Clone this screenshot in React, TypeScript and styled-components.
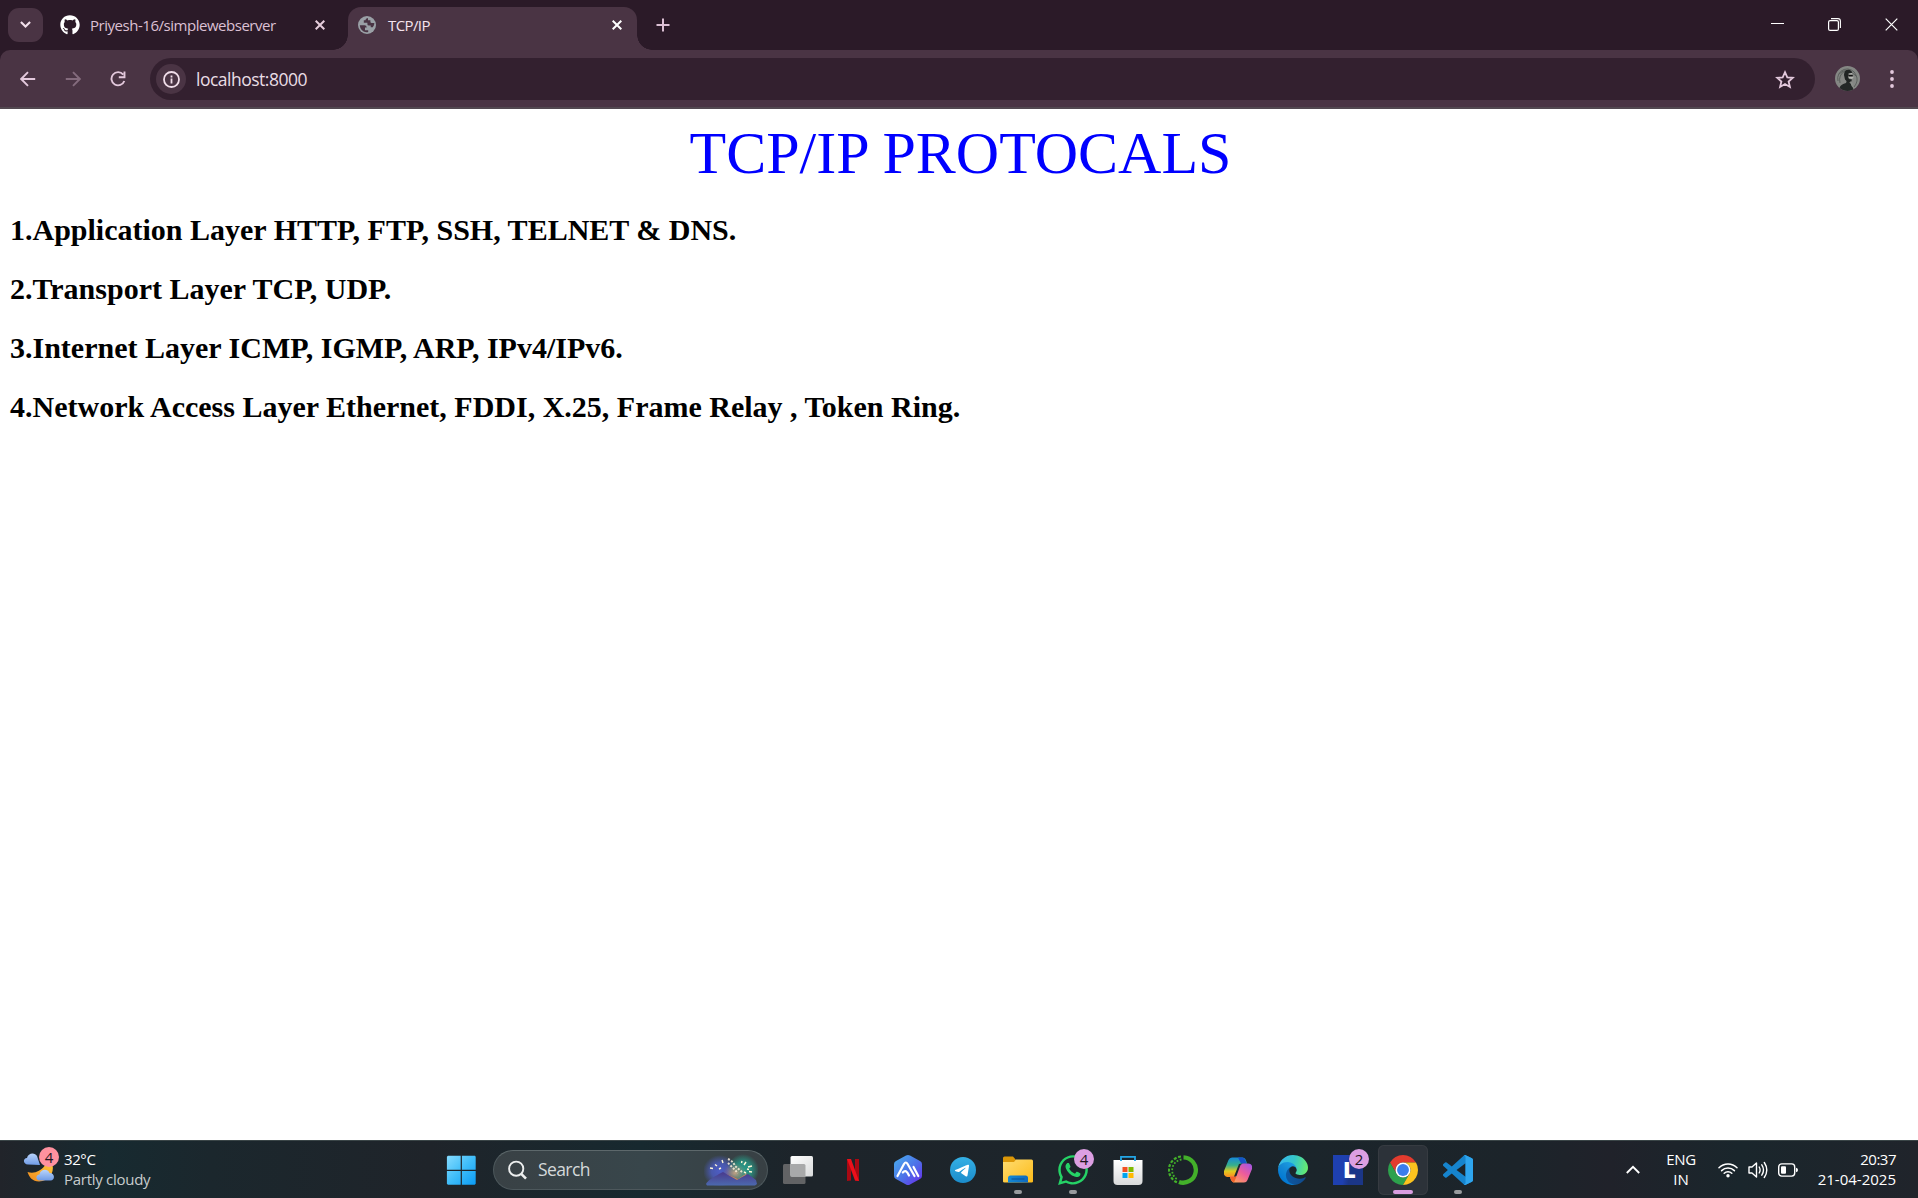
import React from "react";
import styled, { createGlobalStyle } from "styled-components";
import { FaGithub, FaWhatsapp } from "react-icons/fa";

const UI_FONT = '"Open Sans", "Noto Sans", sans-serif';

const GlobalStyle = createGlobalStyle`
  html, body { margin: 0; padding: 0; background: #fff; overflow: hidden; }
  *, *::before, *::after { box-sizing: border-box; }
  svg { display: block; flex: none; }
`;

const Screen = styled.div`
  width: 1918px;
  height: 1198px;
  display: flex;
  flex-direction: column;
  font-family: ${UI_FONT};
  background: #fff;
`;

const Label = styled.span<{ $size?: number; $track?: number; $color?: string }>`
  font-size: ${(p) => p.$size ?? 15}px;
  letter-spacing: ${(p) => p.$track ?? 0}px;
  color: ${(p) => p.$color ?? "#fff"};
  line-height: 20px;
  white-space: nowrap;
`;

/* Browser chrome */
const TabStrip = styled.div`
  height: 50px;
  flex: none;
  display: flex;
  align-items: flex-start;
  background: #2b1a28;
  padding-left: 8px;
`;

const TabSearch = styled.div`
  width: 35px;
  height: 34px;
  margin-top: 8px;
  border-radius: 11px;
  background: #4a3444;
  display: flex;
  align-items: center;
  justify-content: center;
`;

const Tab = styled.div<{ $active?: boolean; $width: number }>`
  position: relative;
  width: ${(p) => p.$width}px;
  height: ${(p) => (p.$active ? 43 : 50)}px;
  margin-top: ${(p) => (p.$active ? 7 : 0)}px;
  padding: ${(p) => (p.$active ? "0 15px 7px 10px" : "0 23px 0 17px")};
  display: flex;
  align-items: center;
  gap: ${(p) => (p.$active ? 12 : 10)}px;
  border-radius: 13px 13px 0 0;
  background: ${(p) => (p.$active ? "#4a3444" : "transparent")};
`;

const TabFoot = styled.span<{ $side: "left" | "right" }>`
  position: absolute;
  bottom: 0;
  ${(p) => p.$side}: -15px;
  width: 15px;
  height: 15px;
  background: radial-gradient(
    circle at ${(p) => (p.$side === "left" ? "0 0" : "100% 0")},
    transparent 14.5px,
    #4a3444 15px
  );
`;

const Spacer = styled.div`
  flex: 1;
`;

const NewTab = styled.div`
  padding: 18px 0 0 19px;
`;

const WindowControls = styled.div`
  display: flex;
  align-items: center;
  gap: 44px;
  height: 48px;
  padding-right: 20px;
`;

const ToolbarBack = styled.div`
  flex: none;
  height: 59px;
  background: #2b1a28;
`;

const Toolbar = styled.div`
  height: 59px;
  background: #4a3444;
  border-radius: 10px 10px 0 0;
  border-bottom: 2px solid #524850;
  display: flex;
  align-items: center;
  padding: 1px 24px 0 20px;
`;

const NavButtons = styled.div`
  display: flex;
  align-items: center;
  width: 130px;
  height: 40px;
  padding-bottom: 1px;
  gap: 29px;
`;

const AddressBar = styled.div`
  width: 1665px;
  height: 42px;
  border-radius: 21px;
  background: #33202f;
  display: flex;
  align-items: center;
  padding: 0 20px 0 6px;
`;

const SiteInfo = styled.div`
  width: 30px;
  height: 30px;
  border-radius: 50%;
  background: #4a3444;
  margin-right: 10px;
  display: flex;
  align-items: center;
  justify-content: center;
`;

const Avatar = styled.div`
  width: 25px;
  height: 25px;
  margin-left: 20px;
  margin-bottom: 1px;
  border-radius: 50%;
  overflow: hidden;
`;

/* Web page */
const Page = styled.main`
  flex: 1;
  padding: 10px;
  font-family: "Liberation Serif", "Times New Roman", serif;
  color: #000;
`;

const Title = styled.div`
  padding-left: 3px;
  color: #00f;
  font-size: 60px;
  line-height: 69px;
  text-align: center;
`;

const LayerLine = styled.h2`
  margin: 25px 0 0;
  font-size: 30px;
  line-height: 34px;
  font-weight: 700;
`;

/* Taskbar */
const Taskbar = styled.footer`
  height: 58px;
  flex: none;
  border-top: 1px solid #3a4547;
  display: flex;
  align-items: center;
  background: linear-gradient(90deg, #21242a 0, #172a30 110px, #1b272d 210px, #1f242a 430px, #17292f 640px, #1d242a 800px, #1d252b 1080px, #1b2229 1180px, #1b252b 1300px, #1c242a 1520px, #20222a 1610px, #1a262c 1740px, #20242b 1918px);
`;

const Weather = styled.div`
  width: 436px;
  display: flex;
  align-items: center;
  padding-left: 23px;
  gap: 9px;
`;

const WeatherIcon = styled.div`
  position: relative;
  width: 32px;
  height: 40px;
`;

const Stack = styled.div<{ $align?: string; $width?: number }>`
  display: flex;
  flex-direction: column;
  width: ${(p) => (p.$width ? `${p.$width}px` : "auto")};
  padding-bottom: 2px;
  align-items: ${(p) => p.$align ?? "flex-start"};
`;

const Badge = styled.span<{ $color: string; $top: number; $left: number }>`
  position: absolute;
  top: ${(p) => p.$top}px;
  left: ${(p) => p.$left}px;
  width: 20px;
  height: 20px;
  border-radius: 50%;
  background: ${(p) => p.$color};
  color: #1e1420;
  font-size: 15px;
  line-height: 20px;
  text-align: center;
`;

const SearchBox = styled.div`
  width: 275px;
  height: 40px;
  margin: 0 5px 0 7px;
  border-radius: 20px;
  border: 1px solid #4d585c;
  border-top-color: #5d686b;
  background: linear-gradient(90deg, #394145, #38464b 55%, #384044);
  display: flex;
  align-items: center;
  padding: 0 9px 0 14px;
`;

const SearchText = styled.div`
  padding: 1px 0 0 11px;
  flex: 1;
`;

const Apps = styled.div`
  display: flex;
  gap: 5px;
`;

const Slot = styled.div<{ $active?: boolean }>`
  position: relative;
  width: 50px;
  height: 50px;
  border-radius: 6px;
  display: flex;
  align-items: center;
  justify-content: center;
  background: ${(p) => (p.$active ? "#2c3239" : "transparent")};
  box-shadow: ${(p) => (p.$active ? "inset 0 0 0 1px #363b41" : "none")};
`;

const Running = styled.span<{ $active?: boolean }>`
  position: absolute;
  bottom: 1px;
  left: ${(p) => (p.$active ? 15 : 21)}px;
  width: ${(p) => (p.$active ? 20 : 8)}px;
  height: 4px;
  border-radius: 2px;
  background: ${(p) => (p.$active ? "#d99de0" : "#989b9e")};
`;

const LetterTile = styled.div`
  width: 30px;
  height: 30px;
  background: linear-gradient(100deg, #1e40b0 0 14px, #1b3687 20px);
  color: #fff;
  font-size: 22px;
  font-weight: 800;
  line-height: 28px;
  padding-left: 10px;
`;

const Tray = styled.div`
  display: flex;
  align-items: center;
  padding-right: 22px;
`;

const Language = styled.div`
  width: 62px;
  margin-left: 10px;
`;

const TrayIcons = styled.div`
  display: flex;
  align-items: center;
  gap: 10px;
  width: 100px;
  margin-left: 6px;
`;

const CloseIcon = ({ color = "#e6cddc", size = 10, width = 2 }) => (
  <svg width={size} height={size} viewBox={`0 0 ${size} ${size}`}>
    <path d={`M.7.7 ${size - 0.7} ${size - 0.7}M${size - 0.7} .7.7 ${size - 0.7}`} stroke={color} strokeWidth={width} />
  </svg>
);

const ChevronIcon = () => (
  <svg width="11" height="8" viewBox="0 0 11 8" fill="none">
    <path d="M.9 1 5.500 5.600 10.100 1" stroke="#f2dfeb" strokeWidth="2.100" />
  </svg>
);

const GlobeIcon = () => (
  <svg width="18" height="18" viewBox="0 0 18 18" fill="none">
    <circle cx="9" cy="9" r="9" fill="#9aa0a6" />
    <path d="M1.800 9.300h4.700q2.200 0 2.200 2.200H7v2.700h3.200v1.700Q8 16.600 5.600 15.400 2.200 13.500 1.800 9.300z" fill="#4a3444" />
    <path d="M10 2q-2.600.3-2.600 2.200H5.800v2.500h3.600v1.500q0 1.300 1.500 1.300h1.800v1.800h2.100q1.700-1.800 1.500-4.300h-2.600q-1.300 0-1.300-1.500V4.200H10z" fill="#4a3444" />
  </svg>
);

const ArrowIcon = ({ flip = false }) => (
  <svg width="16" height="16" viewBox="0 0 16 16" fill="none" transform={flip ? "scale(-1 1)" : undefined}>
    <path d="M15.2 8H1.6M8 1.2 1.2 8 8 14.8" stroke={flip ? "#846b7d" : "#e3c8dc"} strokeWidth="1.9" />
  </svg>
);

const ReloadIcon = () => (
  <svg width="16" height="16" viewBox="0 0 16 16" fill="none">
    <path d="M13.200 3.600A6.600 6.600 0 1 0 14.300 10M14.500.6v5.700H8.800" stroke="#e3c8dc" strokeWidth="1.900" />
  </svg>
);

const InfoIcon = () => (
  <svg width="17" height="17" viewBox="0 0 17 17" fill="none">
    <circle cx="8.5" cy="8.5" r="7.5" stroke="#f0dde9" strokeWidth="1.8" />
    <path d="M8.5 7.6v4.8M8.5 4.5v1.9" stroke="#f0dde9" strokeWidth="1.8" />
  </svg>
);

const StarIcon = () => (
  <svg width="20" height="19" viewBox="0 0 20 19" fill="none">
    <path d="m10 2.2 2.3 5.1 5.5.5-4.2 3.7 1.3 5.5-4.9-2.9L5.1 17l1.3-5.5-4.2-3.7 5.5-.5z" stroke="#e3c8dc" strokeWidth="1.8" />
  </svg>
);

const AvatarArt = () => (
  <svg width="25" height="25" viewBox="0 0 25 25">
    <rect width="25" height="25" fill="#858784" />
    <path d="M3 15a9.500 9.500 0 0 1 18-6M4 8q8-8 17 2M21 9q3 6-2 12M5 17q-2-8 5-12" fill="none" stroke="#5b605d" />
    <path d="M4 25c0-5 3-7 7-8l1-3 5 5 2 6z" fill="#242827" />
    <path d="M9 9c0-5 4-6.500 7.500-4l.5 2-3 1-1 3 1 2 3 .5-1 2.500-3 .5-3-3z" fill="#202423" />
    <path d="m13.500 7.500 3.500-.5 1 3 .5 1.500-1.500 1.500-3-1z" fill="#b4b6b1" />
    <path d="M13 8.800h4.800v1.600h-4z" fill="#111" />
    <path d="m15 15 2.500 2 1 5-2-2z" fill="#8d908c" />
  </svg>
);

const MenuIcon = () => (
  <svg width="4" height="18" viewBox="0 0 4 18" fill="#e3c8dc">
    <circle cx="2" cy="2" r="1.900" />
    <circle cx="2" cy="9" r="1.900" />
    <circle cx="2" cy="16" r="1.900" />
  </svg>
);

const WeatherArt = () => (
  <svg width="34" height="40" viewBox="0 0 34 40">
    <defs>
      <linearGradient id="cloud" x2="0" y2="1"><stop stopColor="#b9d4fb" /><stop offset="1" stopColor="#6f9be6" /></linearGradient>
      <linearGradient id="moon" x1="1" y1="0" x2="0" y2="1"><stop stopColor="#ffc43b" /><stop offset="1" stopColor="#f08a1c" /></linearGradient>
    </defs>
    <path d="M5 14.500c-5 0-5.500-6-1-6.500 1-5.500 8-6 10-2l3 9z" fill="url(#cloud)" />
    <path d="M4.500 22c7 2 13-1 17-6l8-1c2 8-4 16.500-13.500 16.500C9.500 31.500 6 27 4.500 22z" fill="url(#moon)" />
    <path d="M17 30.500c-5 0-4.500-6-.5-6 1-6 8.500-6 10-1.500 5.500-.5 6 7.500 1 7.500z" fill="url(#cloud)" />
  </svg>
);

const WindowsIcon = () => (
  <svg width="30" height="30" viewBox="0 0 30 30">
    <defs><linearGradient id="win" x2="1" y2="1"><stop stopColor="#86dcff" /><stop offset=".5" stopColor="#3fbdf9" /><stop offset="1" stopColor="#0a9bf5" /></linearGradient></defs>
    <path d="M1.900.8H14.700v14H.9v-13zM15.900.8H29l.7 1v13H15.900zM.9 16h13.800v13.800H1.900l-1-1zM15.900 16h13.800v12.800l-1 1H15.900z" fill="url(#win)" />
  </svg>
);

const SearchIcon = () => (
  <svg width="19" height="20" viewBox="0 0 19 20" fill="none">
    <circle cx="8.200" cy="8.700" r="7.100" stroke="#eceeee" strokeWidth="1.900" />
    <path d="m13 13.600 5 5" stroke="#eceeee" strokeWidth="2.600" />
  </svg>
);

const FireworksArt = () => (
  <svg width="54" height="32" viewBox="0 0 54 32">
    <defs>
      <radialGradient id="fwL"><stop stopColor="#4d5dc5" /><stop offset=".5" stopColor="#4d5dc5" stopOpacity=".8" /><stop offset="1" stopColor="#4d5dc5" stopOpacity="0" /></radialGradient>
      <radialGradient id="fwR"><stop stopColor="#259d8a" /><stop offset=".5" stopColor="#259d8a" stopOpacity=".8" /><stop offset="1" stopColor="#25a78d" stopOpacity="0" /></radialGradient>
      <radialGradient id="fwC"><stop stopColor="#e8a987" stopOpacity=".8" /><stop offset="1" stopColor="#b67368" stopOpacity="0" /></radialGradient>
      <linearGradient id="fwM" x2="0" y2="1"><stop stopColor="#49398c" /><stop offset="1" stopColor="#4c69ae" /></linearGradient>
    </defs>
    <ellipse cx="16" cy="17" rx="17" ry="16" fill="url(#fwL)" />
    <ellipse cx="39" cy="16" rx="16" ry="16" fill="url(#fwR)" />
    <ellipse cx="31" cy="19" rx="12" ry="10" fill="url(#fwC)" />
    <path d="M22 20l12 5 9-6-6 12H26z" fill="#e28358" opacity=".8" />
    <path d="M2 30c2-4 8-7 13-10l4-2 7 4 7 4 5-3 6-3 8 6 1 4-2 1.500H3z" fill="url(#fwM)" />
    <path d="m6 14 3 .5M11 10.500l2 1.500M18 6l1 3M15 15l2-1M42 8l-2 3M48 12l-4 1M48 18l-3-.500M38 7l-.5 2M43 15l2 .5M40 18l2 1" stroke="#fff6d6" strokeWidth="1.400" />
    <path d="M24 5q5 2 7 7l7 6M24 9l6 6 4 4" fill="none" stroke="#fff1dc" strokeWidth="2" strokeDasharray="2 1.500" opacity=".85" />
  </svg>
);

const TaskViewIcon = () => (
  <svg width="30" height="28" viewBox="0 0 30 28">
    <defs><linearGradient id="tv" x2="1" y2="1"><stop stopColor="#fff" /><stop offset="1" stopColor="#d8dadb" /></linearGradient></defs>
    <rect y="8" width="22.500" height="20" rx="1.500" fill="#626365" />
    <rect x="7.500" y="0" width="22.500" height="20.500" rx="1.500" fill="url(#tv)" />
    <path d="M7.500 8h13.500q1.500 0 1.500 1.500v11h-15z" fill="#a8a9aa" />
  </svg>
);

const RibbonN = () => (
  <svg width="12" height="22" viewBox="0 0 12 22">
    <path d="M0 0h4v21.500l-4 .5zM8 0h4v22l-4-.5z" fill="#a90913" />
    <path d="M0 0h4l8 22-4-.5z" fill="#ed101b" />
  </svg>
);

const HexIcon = () => (
  <svg width="28" height="30" viewBox="0 0 28 30">
    <defs><linearGradient id="hex" x1="0" y1="0" x2="1" y2="1"><stop stopColor="#48b1ee" /><stop offset=".55" stopColor="#4d70e8" /><stop offset="1" stopColor="#6a27ec" /></linearGradient></defs>
    <path d="M12 .5q2-1 4 0l10 5.500q2 1 2 3v12q0 2-2 3l-10 5.500q-2 1-4 0L2 24q-2-1-2-3V9q0-2 2-3z" fill="url(#hex)" />
    <path d="M3.500 21 10 9q1.800-3 3.600 0L20.500 21M8.800 17.500q3.200-4 6.200 3M19.500 12l4.800 9" fill="none" stroke="#fff" strokeWidth="2.200" strokeLinecap="round" strokeLinejoin="round" />
  </svg>
);

const TelegramIcon = () => (
  <svg width="26" height="26" viewBox="0 0 24 24">
    <defs><linearGradient id="tg" x2="0" y2="1"><stop stopColor="#34b0e5" /><stop offset="1" stopColor="#1b8ccb" /></linearGradient></defs>
    <circle cx="12" cy="12" r="12" fill="url(#tg)" />
    <path d="M16.906 7.224c.1-.002.321.023.465.14a.506.506 0 0 1 .171.325c.016.093.036.306.02.472-.18 1.898-.962 6.502-1.36 8.627-.168.9-.499 1.201-.82 1.230-.696.065-1.225-.460-1.900-.902-1.056-.693-1.653-1.124-2.678-1.800-1.185-.780-.417-1.210.258-1.910.177-.184 3.247-2.977 3.307-3.230.007-.032.014-.150-.056-.212s-.174-.041-.249-.024c-.106.024-1.793 1.140-5.061 3.345-.480.330-.913.490-1.302.480-.428-.008-1.252-.241-1.865-.440-.752-.245-1.349-.374-1.297-.789.027-.216.325-.437.893-.663 3.498-1.524 5.830-2.529 6.998-3.014 3.332-1.386 4.025-1.627 4.476-1.635z" fill="#fff" />
  </svg>
);

const FolderIcon = () => (
  <svg width="30" height="27" viewBox="0 0 30 27">
    <defs><linearGradient id="fold" x2="1" y2="1"><stop stopColor="#ffdc70" /><stop offset="1" stopColor="#fcbb19" /></linearGradient><linearGradient id="foldB" x2="1" y2="0"><stop stopColor="#138ad6" /><stop offset="1" stopColor="#0f69bd" /></linearGradient></defs>
    <path d="M0 2q0-1.500 1.500-1.500H10l3 3.500v5H0z" fill="#dc9707" />
    <path d="M0 6h11l2-2.500h15.500Q30 3.500 30 5v20.500q0 1-1.500 1h-27q-1.500 0-1.500-1z" fill="url(#fold)" />
    <path d="M5 26.500V22q0-2.500 2.500-2.500h15Q25 19.500 25 22v4.500z" fill="url(#foldB)" />
    <path d="M8.500 23h13" stroke="#0b4f94" />
  </svg>
);

const StoreIcon = () => (
  <svg width="30" height="30" viewBox="0 0 30 30">
    <defs><linearGradient id="bag" x2="0" y2="1"><stop stopColor="#fff" /><stop offset="1" stopColor="#d9dadb" /></linearGradient></defs>
    <path d="M.5 5h29v21q0 4-4 4h-21q-4 0-4-4z" fill="url(#bag)" />
    <path d="M8 6V1.800h14V6" fill="none" stroke="#23a6e6" strokeWidth="1.800" />
    <path d="M9.500 12h5v5h-5z" fill="#f25022" />
    <path d="M15.500 12h5v5h-5z" fill="#7fba00" />
    <path d="M9.500 18h5v5h-5z" fill="#00a4ef" />
    <path d="M15.500 18h5v5h-5z" fill="#ffb900" />
  </svg>
);

const AnacondaIcon = () => (
  <svg width="30" height="30" viewBox="0 0 30 30" fill="none" stroke="#43b02a">
    <path d="M15.500 2.300A12.700 12.700 0 1 1 11 27" strokeWidth="4.300" />
    <path d="M13 1.500A13.500 13.500 0 0 0 9.500 27.500" strokeWidth="2.200" strokeDasharray="3 1.600" />
    <path d="M13.500 4.500A10.800 10.800 0 0 0 10 24.800" strokeWidth="1.800" strokeDasharray="1.800 1.600" />
  </svg>
);

const CopilotIcon = () => (
  <svg width="28" height="26" viewBox="0 0 28 26">
    <defs>
      <linearGradient id="cpL" x2="0" y2="1"><stop stopColor="#1689d8" /><stop offset=".4" stopColor="#36b08b" /><stop offset=".7" stopColor="#dfcb20" /><stop offset="1" stopColor="#ff8b20" /></linearGradient>
      <linearGradient id="cpR" x1="1" y1="0" x2=".2" y2="1"><stop stopColor="#9b55ed" /><stop offset=".5" stopColor="#ed5b9c" /><stop offset="1" stopColor="#ffa45a" /></linearGradient>
    </defs>
    <path d="M8 .5h10c3 0 4 2 5 6h-5L13.500 15q-1 5-4 5H5c-4 0-6-2-5-6L4.500 3Q5.500.5 8 .5z" fill="url(#cpL)" />
    <path d="M14 .5h4q3 0 4.500 6H17z" fill="#1653c7" />
    <path d="M20 25.500H11c-3 0-4-2-5-6h5L15 11q1.500-4.500 4.500-4.500H24c3.500 0 4.500 2 4 5.500l-4.500 11q-1 2.500-3.500 2.500z" fill="url(#cpR)" />
    <path d="M6 19.500h6.500L10 25.500q-3-.5-4-6z" fill="#f2632b" />
    <path d="m15 7 3-.5-1.500 1.500L12.500 19l-1 .5h-1.500z" fill="#1e272e" />
  </svg>
);

const EdgeIcon = () => (
  <svg width="30" height="30" viewBox="0 0 256 256">
    <defs>
      <linearGradient id="edA" x1="63" y1="178" x2="241" y2="178" gradientUnits="userSpaceOnUse"><stop stopColor="#0c59a4" /><stop offset="1" stopColor="#114a8b" /></linearGradient>
      <linearGradient id="edB" x1="157" y1="105" x2="46" y2="225" gradientUnits="userSpaceOnUse"><stop stopColor="#1b9de2" /><stop offset=".5" stopColor="#1387d4" /><stop offset="1" stopColor="#0078d4" /></linearGradient>
      <linearGradient id="edC" x1="20" y1="60" x2="255" y2="110" gradientUnits="userSpaceOnUse"><stop stopColor="#35b9ed" /><stop offset=".5" stopColor="#36c6c8" /><stop offset="1" stopColor="#66eb6e" /></linearGradient>
    </defs>
    <g transform="translate(-4.630 -4.920)">
      <path fill="url(#edA)" d="M235.680 195.460a93.730 93.730 0 0 1-10.540 4.710 101.870 101.870 0 0 1-35.900 6.460c-47.320 0-88.540-32.550-88.540-74.320A31.480 31.480 0 0 1 117.130 105c-42.800 1.800-53.800 46.400-53.800 72.530 0 73.880 68.090 81.370 82.760 81.370 7.910 0 19.840-2.300 27-4.560l1.310-.440a128.340 128.340 0 0 0 66.600-52.800 4 4 0 0 0-5.320-5.640Z" />
      <path fill="url(#edB)" d="M110.340 246.340A79.200 79.200 0 0 1 87.600 225a80.720 80.720 0 0 1 29.530-120c3.120-1.470 8.450-4.130 15.540-4a32.350 32.350 0 0 1 25.690 13 31.880 31.880 0 0 1 6.360 18.660c0-.210 24.460-79.600-80-79.600-43.900 0-80 41.660-80 78.210a130.150 130.150 0 0 0 12.110 56 128 128 0 0 0 156.380 67.110 75.550 75.550 0 0 1-62.780-8Z" />
      <path fill="url(#edC)" d="M156.940 153.780c-.810 1.050-3.300 2.500-3.300 5.660 0 2.610 1.700 5.120 4.720 7.230 14.380 10 41.490 8.680 41.560 8.680a59.560 59.560 0 0 0 30.270-8.350 61.380 61.380 0 0 0 30.430-52.880c.260-22.410-8-37.310-11.340-43.910-21.190-41.450-66.930-65.290-116.670-65.290a128 128 0 0 0-128 126.200c.480-36.540 36.800-66.050 80-66.050 3.500 0 23.460.340 42 10.070 16.340 8.580 24.900 18.940 30.850 29.210 6.180 10.670 7.280 24.150 7.280 29.520s-2.740 13.330-7.800 19.910Z" />
    </g>
  </svg>
);

const ChromeIcon = () => (
  <svg width="30" height="30" viewBox="0 0 48 48">
    <path d="M24 12h20.780A24 24 0 0 0 3.220 12l10.390 18A12 12 0 0 1 24 12z" fill="#e33b2e" />
    <path d="M34.390 30 24 48A24 24 0 0 1 3.220 12l10.390 18A12 12 0 0 0 34.390 30z" fill="#2da14c" />
    <path d="M34.390 30 24 48A24 24 0 0 0 44.780 12H24A12 12 0 0 1 34.390 30z" fill="#fcc31e" />
    <circle cx="24" cy="24" r="12" fill="#fff" />
    <circle cx="24" cy="24" r="9.500" fill="#3b7ded" />
  </svg>
);

const CodeIcon = () => (
  <svg width="30" height="30" viewBox="0 0 24 24">
    <path d="M23.150 2.587L18.210.210a1.494 1.494 0 0 0-1.705.290l-9.460 8.630-4.120-3.128a.999.999 0 0 0-1.276.057L.327 7.261A1 1 0 0 0 .326 8.740L3.899 12 .326 15.260a1 1 0 0 0 .001 1.479L1.650 17.940a.999.999 0 0 0 1.276.057l4.120-3.128 9.460 8.630a1.492 1.492 0 0 0 1.704.290l4.942-2.377A1.500 1.500 0 0 0 24 20.060V3.939a1.500 1.500 0 0 0-.850-1.352zm-5.146 14.861L10.826 12l7.178-5.448v10.896z" fill="#1684cd" />
    <path d="M23.150 2.587 18.210.210q-.8-.3-1.500.2.800 0 1.300.900v21.380q-.5.900-1.300.900.700.500 1.500.2l4.942-2.377A1.500 1.500 0 0 0 24 20.060V3.939a1.500 1.500 0 0 0-.850-1.352z" fill="#2ea5ee" />
  </svg>
);

const WifiIcon = () => (
  <svg width="20" height="16" viewBox="0 0 20 16" fill="none" stroke="#fff" strokeWidth="1.500" strokeLinecap="round">
    <path d="M1 5.800a12.500 12.500 0 0 1 18 0M3.600 8.600a9 9 0 0 1 12.800 0M6.200 11.300a5.400 5.400 0 0 1 7.600 0" />
    <circle cx="10" cy="13.800" r="1.700" fill="#fff" stroke="none" />
  </svg>
);

const SpeakerIcon = () => (
  <svg width="20" height="18" viewBox="0 0 20 18" fill="none" stroke="#fff" strokeWidth="1.400" strokeLinejoin="round" strokeLinecap="round">
    <path d="M1 6v6h3l4.500 4V2L4 6zM11.200 6q1.800 3 0 6M13.800 3.800q3.400 5.200 0 10.400M16.300 1.500q5 7.500 0 15" />
  </svg>
);

const BatteryIcon = () => (
  <svg width="20" height="14" viewBox="0 0 20 14" fill="none">
    <rect x=".7" y=".9" width="16" height="12.200" rx="3" stroke="#fff" strokeWidth="1.400" />
    <rect x="3" y="3.200" width="5" height="7.600" rx="1" fill="#fff" />
    <path d="M18 4.800q2 .4 2 2.200t-2 2.200z" fill="#fff" />
  </svg>
);

const LAYERS = [
  "1.Application Layer HTTP, FTP, SSH, TELNET & DNS.",
  "2.Transport Layer TCP, UDP.",
  "3.Internet Layer ICMP, IGMP, ARP, IPv4/IPv6.",
  "4.Network Access Layer Ethernet, FDDI, X.25, Frame Relay , Token Ring.",
];

type AppItem = { name: string; icon: React.ReactNode; running?: boolean; active?: boolean; badge?: string };

const APPS: AppItem[] = [
  { name: "taskview", icon: <TaskViewIcon /> },
  { name: "netflix", icon: <RibbonN /> },
  { name: "hex", icon: <HexIcon /> },
  { name: "telegram", icon: <TelegramIcon /> },
  { name: "explorer", icon: <FolderIcon />, running: true },
  { name: "whatsapp", icon: <FaWhatsapp size={34} color="#25d366" />, running: true, badge: "4" },
  { name: "store", icon: <StoreIcon /> },
  { name: "anaconda", icon: <AnacondaIcon /> },
  { name: "copilot", icon: <CopilotIcon /> },
  { name: "edge", icon: <EdgeIcon /> },
  { name: "l", icon: <LetterTile>L</LetterTile>, badge: "2" },
  { name: "chrome", icon: <ChromeIcon />, running: true, active: true },
  { name: "code", icon: <CodeIcon />, running: true },
];

export default function App() {
  return (
    <Screen>
      <GlobalStyle />
      <TabStrip>
        <TabSearch><ChevronIcon /></TabSearch>
        <Tab $width={305}>
          <FaGithub size={20} color="#fff" />
          <Label $track={-0.47} $color="#dcc0d4">Priyesh-16/simplewebserver</Label>
          <Spacer />
          <CloseIcon />
        </Tab>
        <Tab $width={289} $active>
          <TabFoot $side="left" />
          <GlobeIcon />
          <Label $track={-0.6} $color="#f5e4ef">TCP/IP</Label>
          <Spacer />
          <CloseIcon color="#fff" />
          <TabFoot $side="right" />
        </Tab>
        <NewTab>
          <svg width="14" height="14" viewBox="0 0 14 14"><path d="M7 .5v13M.5 7h13" stroke="#dcc0d4" strokeWidth="2" /></svg>
        </NewTab>
        <Spacer />
        <WindowControls>
          <svg width="13" height="13" viewBox="0 0 13 13"><path d="M0 5.500h13" stroke="#fff" /></svg>
          <svg width="13" height="13" viewBox="0 0 13 13" fill="none" stroke="#fff"><rect x=".6" y="2.600" width="9.800" height="9.800" rx="1.500" strokeWidth="1.200" /><path d="M3 .6h7q2.400 0 2.400 2.400v7" strokeWidth="1.100" /></svg>
          <CloseIcon color="#fff" size={13} width={1.2} />
        </WindowControls>
      </TabStrip>
      <ToolbarBack>
        <Toolbar>
          <NavButtons>
            <ArrowIcon />
            <ArrowIcon flip />
            <ReloadIcon />
          </NavButtons>
          <AddressBar>
            <SiteInfo><InfoIcon /></SiteInfo>
            <Label $size={17.5} $track={-0.5} $color="#e9dde5">localhost:8000</Label>
            <Spacer />
            <StarIcon />
          </AddressBar>
          <Avatar><AvatarArt /></Avatar>
          <Spacer />
          <MenuIcon />
        </Toolbar>
      </ToolbarBack>
      <Page>
        <Title>TCP/IP PROTOCALS</Title>
        {LAYERS.map((line) => <LayerLine key={line}>{line}</LayerLine>)}
      </Page>
      <Taskbar>
        <Weather>
          <WeatherIcon>
            <WeatherArt />
            <Badge $color="#ff919f" $top={-3} $left={16}>4</Badge>
          </WeatherIcon>
          <Stack>
            <Label $track={-0.4}>32°C</Label>
            <Label $track={-0.28} $color="#c7cccd">Partly cloudy</Label>
          </Stack>
        </Weather>
        <Slot><WindowsIcon /></Slot>
        <SearchBox>
          <SearchIcon />
          <SearchText><Label $size={17.5} $track={-0.6} $color="#d5d9da">Search</Label></SearchText>
          <FireworksArt />
        </SearchBox>
        <Apps>
          {APPS.map((a) => (
            <Slot key={a.name} $active={a.active}>
              {a.icon}
              {a.badge && <Badge $color="#dc9fe2" $top={4} $left={26}>{a.badge}</Badge>}
              {a.running && <Running $active={a.active} />}
            </Slot>
          ))}
        </Apps>
        <Spacer />
        <Tray>
          <svg width="14" height="9" viewBox="0 0 14 9" fill="none"><path d="m.8 8 6.200-6.200L13.200 8" stroke="#fff" strokeWidth="1.900" /></svg>
          <Language>
            <Stack $align="center">
              <Label $track={-0.4}>ENG</Label>
              <Label>IN</Label>
            </Stack>
          </Language>
          <TrayIcons><WifiIcon /><SpeakerIcon /><BatteryIcon /></TrayIcons>
          <Stack $align="flex-end" $width={78}>
            <Label $track={-0.5}>20:37</Label>
            <Label $track={0}>21-04-2025</Label>
          </Stack>
        </Tray>
      </Taskbar>
    </Screen>
  );
}
